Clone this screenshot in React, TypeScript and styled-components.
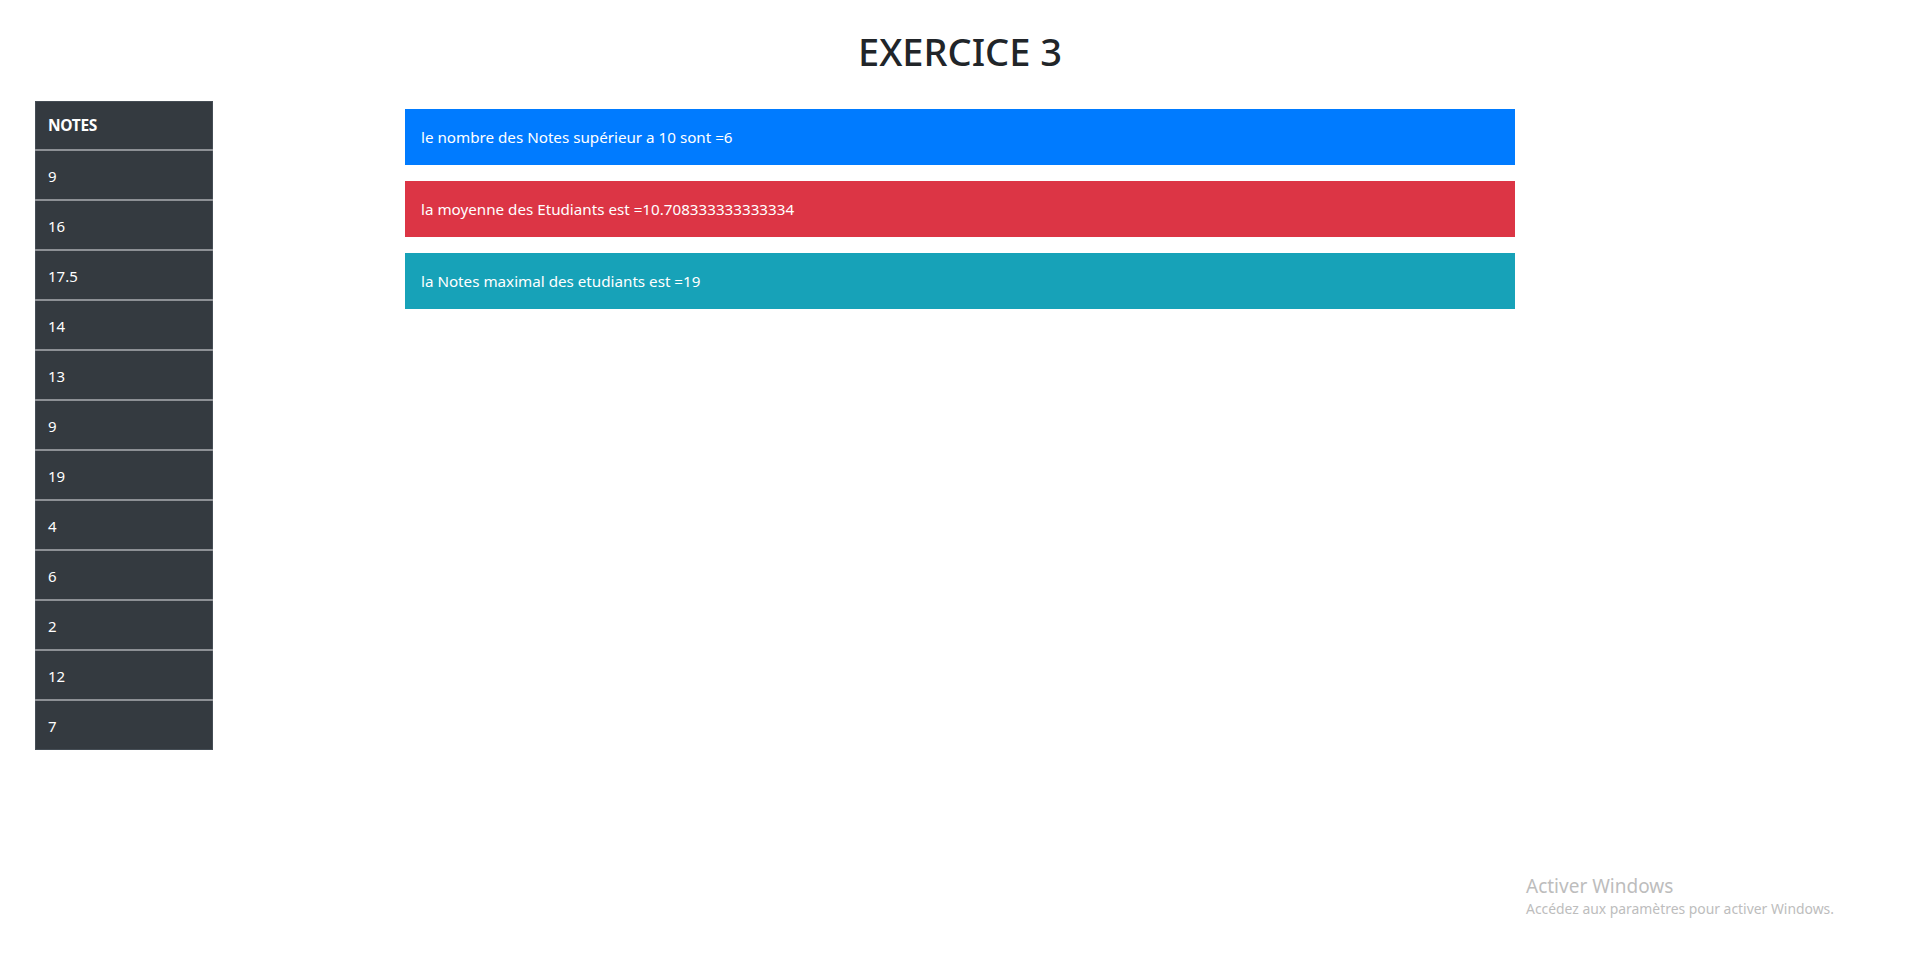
import React from "react";
import styled, { createGlobalStyle } from "styled-components";

const Global = createGlobalStyle`
  html, body { margin: 0; padding: 0; background: #fff; }
  body { font-family: "Noto Sans", "Open Sans", sans-serif; color: #212529; }
  * { box-sizing: border-box; }
`;

const Page = styled.div`
  width: 1920px;
  height: 964px;
  position: relative;
  overflow: hidden;
`;

const Title = styled.h1`
  margin: 0;
  padding-top: 27px;
  height: 101px;
  text-align: center;
  font-size: 38px;
  font-weight: 500;
  line-height: 48px;
  color: #212529;
`;

const Main = styled.div`
  display: grid;
  grid-template-columns: 1fr 1110px 1fr;
  align-items: start;
`;

const Side = styled.div`
  padding-left: 35px;
`;

const Table = styled.table`
  width: 178px;
  border-collapse: collapse;
  background: #343a40;
  color: #fff;
  font-size: 15px;
  border: 1px solid #454d55;
`;

const HeadCell = styled.th`
  text-align: left;
  font-weight: 700;
  height: 48px;
  padding: 0 12px;
  font-size: 15.5px;
  letter-spacing: -0.3px;
`;

const Cell = styled.td`
  height: 50px;
  padding: 2px 12px 0;
  border-top: 2px solid #8d9095;
`;

const Alerts = styled.div`
  padding-top: 8px;
  display: flex;
  flex-direction: column;
  gap: 16px;
`;

const Alert = styled.div<{ $bg: string }>`
  background: ${(p) => p.$bg};
  color: #fff;
  height: 56px;
  padding: 0 16px;
  display: flex;
  align-items: center;
  font-size: 15.2px;
`;

const Watermark = styled.div`
  position: absolute;
  left: 1526px;
  top: 873px;
  color: #bdbdbd;
  font-family: "Noto Sans", sans-serif;
`;

const WmTitle = styled.div`
  font-size: 19px;
  line-height: 27px;
`;

const WmSub = styled.div`
  font-size: 13.9px;
  line-height: 18px;
`;

const notes = ["9", "16", "17.5", "14", "13", "9", "19", "4", "6", "2", "12", "7"];

export default function App() {
  return (
    <Page>
      <Global />
      <Title>EXERCICE 3</Title>
      <Main>
        <Side>
          <Table>
            <thead>
              <tr>
                <HeadCell>NOTES</HeadCell>
              </tr>
            </thead>
            <tbody>
              {notes.map((n, i) => (
                <tr key={i}>
                  <Cell>{n}</Cell>
                </tr>
              ))}
            </tbody>
          </Table>
        </Side>
        <Alerts>
          <Alert $bg="#007bff">le nombre des Notes supérieur a 10 sont =6</Alert>
          <Alert $bg="#dc3545">la moyenne des Etudiants est =10.708333333333334</Alert>
          <Alert $bg="#17a2b8">la Notes maximal des etudiants est =19</Alert>
        </Alerts>
        <div />
      </Main>
      <Watermark>
        <WmTitle>Activer Windows</WmTitle>
        <WmSub>Accédez aux paramètres pour activer Windows.</WmSub>
      </Watermark>
    </Page>
  );
}
